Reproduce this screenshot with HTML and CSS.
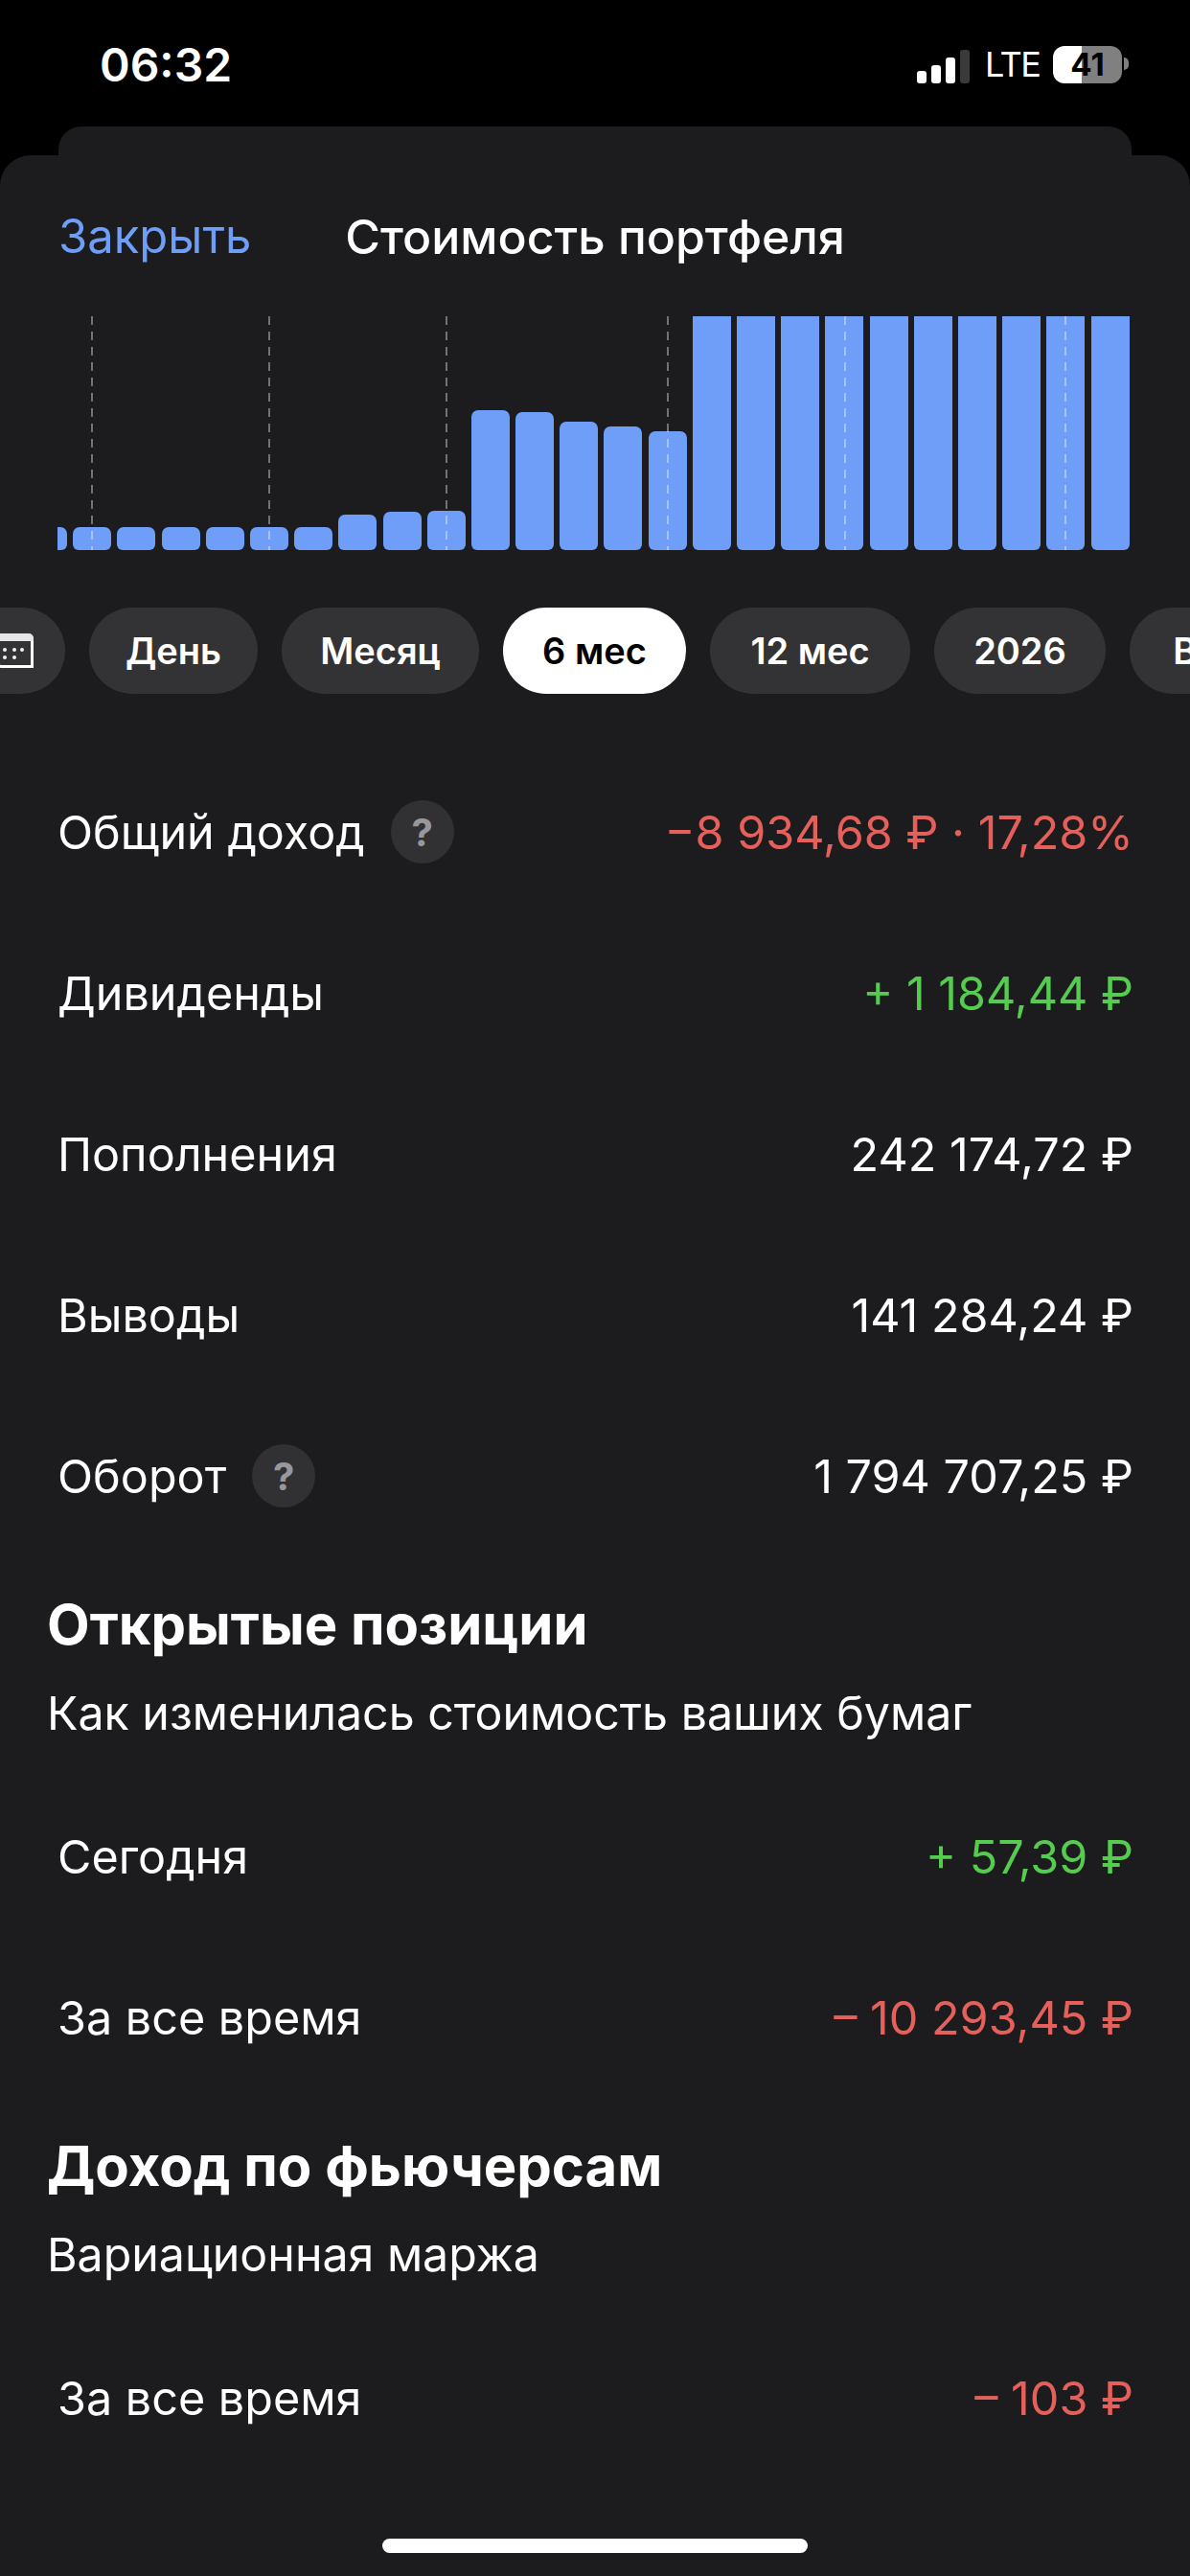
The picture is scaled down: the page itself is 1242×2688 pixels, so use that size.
FILE: index.html
```html
<!DOCTYPE html>
<html lang="ru">
<head>
<meta charset="utf-8">
<title>Стоимость портфеля</title>
<link rel="stylesheet" href="styles.css">
</head>
<body>
<div class="phone">
  <header class="status">
    <span class="time">06:32</span>
    <div class="status-right">
      <div class="signal"><i class="s1"></i><i class="s2"></i><i class="s3"></i><i class="s4"></i></div>
      <span class="lte">LTE</span>
      <div class="battery"><span>41</span></div>
    </div>
  </header>
  <div class="back-card"></div>
  <main class="sheet">
    <div class="nav">
      <span class="close">Закрыть</span>
      <span class="title">Стоимость портфеля</span>
    </div>
    <div class="chart">
      <div class="bars">
        <i class="bar" style="height:24px"></i><i class="bar" style="height:24px"></i><i class="bar" style="height:24px"></i><i class="bar" style="height:24px"></i><i class="bar" style="height:24px"></i><i class="bar" style="height:24px"></i><i class="bar" style="height:24px"></i><i class="bar" style="height:37px"></i><i class="bar" style="height:40px"></i><i class="bar" style="height:41px"></i><i class="bar" style="height:146px"></i><i class="bar" style="height:144px"></i><i class="bar" style="height:134px"></i><i class="bar" style="height:129px"></i><i class="bar" style="height:124px"></i><i class="bar tall"></i><i class="bar tall"></i><i class="bar tall"></i><i class="bar tall"></i><i class="bar tall"></i><i class="bar tall"></i><i class="bar tall"></i><i class="bar tall"></i><i class="bar tall"></i><i class="bar tall"></i>
      </div>
      <i class="grid-line" style="left:35px"></i><i class="grid-line" style="left:220px"></i><i class="grid-line" style="left:405px"></i><i class="grid-line" style="left:636px"></i><i class="grid-line" style="left:821px"></i><i class="grid-line" style="left:1051px"></i>
    </div>
    <div class="pills">
      <div class="pill pill-cal">
        <svg class="cal" width="40" height="38" viewBox="0 0 40 38" aria-hidden="true">
          <path d="M6 2.500H33a4.500 4.500 0 0 1 4.500 4.500V35.500H6a4.500 4.500 0 0 1-4.500-4.500V7A4.500 4.500 0 0 1 6 2.500Z" fill="none" stroke="#fff" stroke-width="3"/>
          <path d="M1 9V6a5 5 0 0 1 5-5H34a5 5 0 0 1 5 5V9Z" fill="#e6e6e6"/>
          <g fill="#f2f2f2"><circle cx="9" cy="18" r="2"/><circle cx="19" cy="18" r="2"/><circle cx="27" cy="18" r="2"/><circle cx="9" cy="26" r="2"/><circle cx="19" cy="26" r="2"/></g>
        </svg>
      </div>
      <div class="pill w-day">День</div>
      <div class="pill w-month">Месяц</div>
      <div class="pill w-six active">6 мес</div>
      <div class="pill w-twelve">12 мес</div>
      <div class="pill w-year">2026</div>
      <div class="pill w-all">Все</div>
    </div>
    <section class="rows first">
      <div class="row"><span class="label">Общий доход <b class="help">?</b></span><span class="neg">−8 934,68 ₽ · 17,28%</span></div>
      <div class="row"><span class="label">Дивиденды</span><span class="pos">+ 1 184,44 ₽</span></div>
      <div class="row"><span class="label">Пополнения</span><span>242 174,72 ₽</span></div>
      <div class="row"><span class="label">Выводы</span><span>141 284,24 ₽</span></div>
      <div class="row"><span class="label">Оборот <b class="help">?</b></span><span>1 794 707,25 ₽</span></div>
    </section>
    <h2 class="head">Открытые позиции</h2>
    <p class="sub">Как изменилась стоимость ваших бумаг</p>
    <section class="rows">
      <div class="row"><span class="label">Сегодня</span><span class="pos">+ 57,39 ₽</span></div>
      <div class="row"><span class="label">За все время</span><span class="neg">– 10 293,45 ₽</span></div>
    </section>
    <h2 class="head">Доход по фьючерсам</h2>
    <p class="sub">Вариационная маржа</p>
    <section class="rows">
      <div class="row"><span class="label">За все время</span><span class="neg">– 103 ₽</span></div>
    </section>
  </main>
  <div class="home"></div>
</div>
</body>
</html>
```
FILE: styles.css
```css
* { box-sizing: border-box; }
html, body { margin: 0; padding: 0; background: #000; }
body { font-family: Inter, "Liberation Sans", sans-serif; color: #fff; }
.phone { position: relative; width: 1242px; height: 2688px; overflow: hidden; background: #000; }

.status { height: 132px; display: flex; justify-content: space-between; align-items: flex-start; padding: 40px 71px 0 104px; }
.time { font-size: 48px; font-weight: 600; line-height: 56px; }
.status-right { display: flex; align-items: center; height: 39px; margin-top: 8px; }
.signal { display: flex; align-items: flex-end; gap: 5px; height: 35px; margin-top: 3px; }
.signal i { display: block; width: 10px; border-radius: 3px; background: #fff; }
.signal .s1 { height: 13px; }
.signal .s2 { height: 19px; }
.signal .s3 { height: 27px; }
.signal .s4 { height: 35px; background: #3a3a3a; }
.lte { width: 71px; margin-left: 16px; font-size: 36px; font-weight: 400; line-height: 39px; letter-spacing: -1.5px; }
.battery { position: relative; width: 72px; height: 39px; border-radius: 12px; background: linear-gradient(90deg, #fff 41%, #808080 41%); color: #000; font-size: 33px; font-weight: 700; line-height: 39px; text-align: center; }
.battery::after { content: ""; position: absolute; left: 74px; top: 12px; width: 5px; height: 13px; border-radius: 0 7px 7px 0; background: #808080; }

.back-card { height: 30px; margin: 0 61px; background: #1c1c1e; border-radius: 24px 24px 0 0; }
.sheet { height: 2526px; background: #1c1c1e; border-radius: 32px 32px 0 0; }

.nav { position: relative; height: 168px; padding: 54px 0 0 61px; font-size: 49px; line-height: 62px; }
.close { color: #6f9ef8; }
.title { position: absolute; left: 0; right: 0; top: 54px; text-align: center; font-size: 50px; font-weight: 500; }

.chart { position: relative; height: 244px; margin: 0 63px 0 60px; overflow: hidden; }
.bars { display: flex; align-items: flex-end; gap: 6.2px; height: 100%; margin-left: -30px; }
.bar { display: block; flex: none; width: 40px; border-radius: 7px 7px 6px 6px; background: #6f9ef8; }
.bar.tall { height: 244px; border-radius: 0 0 6px 6px; }
.grid-line { position: absolute; top: 0; bottom: 0; width: 2px; background: repeating-linear-gradient(180deg, rgba(255,255,255,.38) 0 9px, transparent 9px 16px); }

.pills { display: flex; gap: 25px; height: 90px; margin: 60px 0 0 -132px; }
.pill { flex: none; display: flex; align-items: center; justify-content: center; height: 90px; border-radius: 45px; background: #333335; font-size: 38px; font-weight: 600; }
.pill.active { background: #fff; color: #000; }
.pill-cal { width: 200px; padding-left: 128px; justify-content: flex-start; }
.cal { display: block; flex: none; }
.w-day { width: 176px; }
.w-month { width: 206px; }
.w-six { width: 191px; }
.w-twelve { width: 209px; }
.w-year { width: 179px; }
.w-all { width: 160px; }

.rows.first { margin-top: 60px; }
.row { display: flex; justify-content: space-between; align-items: center; height: 168px; padding: 0 59px 0 60px; font-size: 48.5px; }
.label { display: flex; align-items: center; }
.help { display: flex; align-items: center; justify-content: center; width: 66px; height: 66px; margin-left: 27px; border-radius: 50%; background: #313134; color: #98989c; font-size: 40px; font-weight: 700; }
.neg { color: #e5605a; }
.pos { color: #55cc50; }

.head { margin: 37px 0 0; padding: 0 49px; font-size: 58px; font-weight: 700; line-height: 68px; }
.sub { margin: 28px 0 34px; padding: 0 49px; font-size: 48.3px; line-height: 62px; }

.home { position: absolute; left: 399px; bottom: 24px; width: 444px; height: 15px; border-radius: 8px; background: #fff; }
```
